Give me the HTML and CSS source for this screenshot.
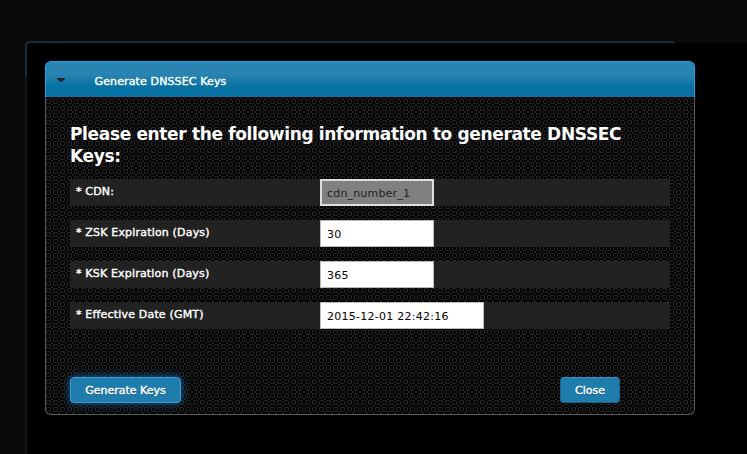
FILE: index.html
```html
<!DOCTYPE html>
<html lang="en">
<head>
<meta charset="utf-8">
<title>Generate DNSSEC Keys</title>
<link rel="stylesheet" href="styles.css">
</head>
<body>
<main class="overlay">
  <section class="panel">
    <header class="panel-header">
      <svg class="arrow" width="8" height="5" viewBox="0 0 8 5"><path d="M0 0h8v1L4.5 4h-1L0 1z"/></svg>
      <span class="medium title">Generate DNSSEC Keys</span>
    </header>
    <form class="content">
      <svg class="pattern" width="100%" height="100%" aria-hidden="true">
        <defs>
          <pattern id="rings" width="7" height="7" patternUnits="userSpaceOnUse" x="-1" y="1">
            <path fill="#262626" d="M2 1h3v1H2zM2 5h3v1H2zM1 2h1v3H1zM5 2h1v3H5z"/>
            <path fill="#1e1e1e" d="M0 0h1v1H0zM6 0h1v1H6zM0 6h1v1H0zM6 6h1v1H6z"/>
            <path fill="#121212" d="M3 3h1v1H3zM1 1h1v1H1zM5 1h1v1H5zM1 5h1v1H1zM5 5h1v1H5z"/>
          </pattern>
        </defs>
        <rect width="100%" height="100%" fill="url(#rings)" shape-rendering="crispEdges"/>
      </svg>
      <h1><span>Please enter the following information to generate DNSSEC</span><br><span>Keys:</span></h1>
      <div class="row"><label class="medium" for="cdn">* CDN:</label><input id="cdn" class="readonly" value="cdn_number_1" readonly></div>
      <div class="row"><label class="medium" for="zsk">* ZSK Expiration (Days)</label><input id="zsk" value="30"></div>
      <div class="row"><label class="medium" for="ksk">* KSK Expiration (Days)</label><input id="ksk" value="365"></div>
      <div class="row"><label class="medium" for="date">* Effective Date (GMT)</label><input id="date" class="wide" value="2015-12-01 22:42:16"></div>
      <div class="actions">
        <button type="button" class="medium generate">Generate Keys</button>
        <button type="button" class="medium close">Close</button>
      </div>
    </form>
  </section>
</main>
</body>
</html>
```
FILE: styles.css
```css
* { box-sizing: border-box; }
body {
  margin: 0;
  height: 454px;
  overflow: hidden;
  padding: 41px 0 0 25px;
  background: #0a0907;
  font: 11px/14px "DejaVu Sans", Verdana, sans-serif;
  color: #fff;
}
.overlay {
  position: relative;
  height: 413px;
  padding: 20px 0 0 20px;
  background: linear-gradient(#0a0907, #0a0907) 646px 0 / 80px 2px no-repeat, #000;
  border-radius: 5px 0 0 0;
}
.overlay::before {
  content: "";
  position: absolute;
  left: 0;
  top: 0;
  width: 648px;
  height: 36px;
  border: solid #142f3f;
  border-width: 2px 0 0 2px;
  border-radius: 5px 3px 0 0;
}
.overlay::after {
  content: "";
  position: absolute;
  left: 0;
  top: 36px;
  width: 2px;
  bottom: 0;
  background: #141414;
}
.panel { position: relative; width: 650px; }
.panel-header {
  display: flex;
  align-items: center;
  height: 36px;
  padding: 4px 0 0 11px;
  border: solid #24a5e8;
  border-width: 1px 1px 0;
  border-radius: 6px 6px 0 0;
  background: linear-gradient(#2984b2 0, #2984b2 35%, #0972a5 70%, #0972a5 100%);
}
.arrow { fill: #222; margin-top: -3px; }
.title { margin-left: 29.5px; letter-spacing: .13px; }
.medium { -webkit-text-stroke: .4px currentColor; }
.content {
  position: relative;
  height: 318px;
  padding: 26px 24px 0;
  border: 1px solid #5c5c5c;
  border-top: 0;
  border-radius: 0 0 6px 6px;
  background: #000;
  overflow: hidden;
}
.pattern { position: absolute; left: 0; top: 0; }
h1 {
  position: relative;
  margin: 0 0 12px;
  font: bold 17px/22px "DejaVu Sans", Verdana, sans-serif;
  letter-spacing: -.35px;
  white-space: nowrap;
}
.row {
  position: relative;
  display: flex;
  align-items: flex-start;
  height: 27px;
  margin-bottom: 14px;
  background: #222;
}
.row label { width: 250px; padding: 6px 0 0 6px; letter-spacing: .18px; }
input {
  width: 114px;
  height: 27px;
  margin: 0;
  padding: 2px 6px 0;
  border: 1px solid #bbb;
  border-radius: 0;
  background: #fff;
  color: #000;
  font: inherit;
  letter-spacing: .26px;
}
.readonly { border: 2px solid #ddd; padding: 2px 5px 0; background: #808080; color: #222; letter-spacing: .18px; }
.wide { width: 164px; }
.actions {
  position: relative;
  display: flex;
  justify-content: space-between;
  padding: 34px 50px 0 0;
}
button {
  height: 26px;
  padding: 2px 0 0;
  border: 1px solid #17658c;
  border-top-color: #3a91c0;
  border-radius: 4px;
  background: #1f7dad;
  color: #fff;
  font: inherit;
  text-shadow: 0 1px 1px #14506f;
}
.generate { width: 111px; border-color: #3f98dc; box-shadow: 0 0 8px #1f6caa; }
.close { width: 60px; }
```
